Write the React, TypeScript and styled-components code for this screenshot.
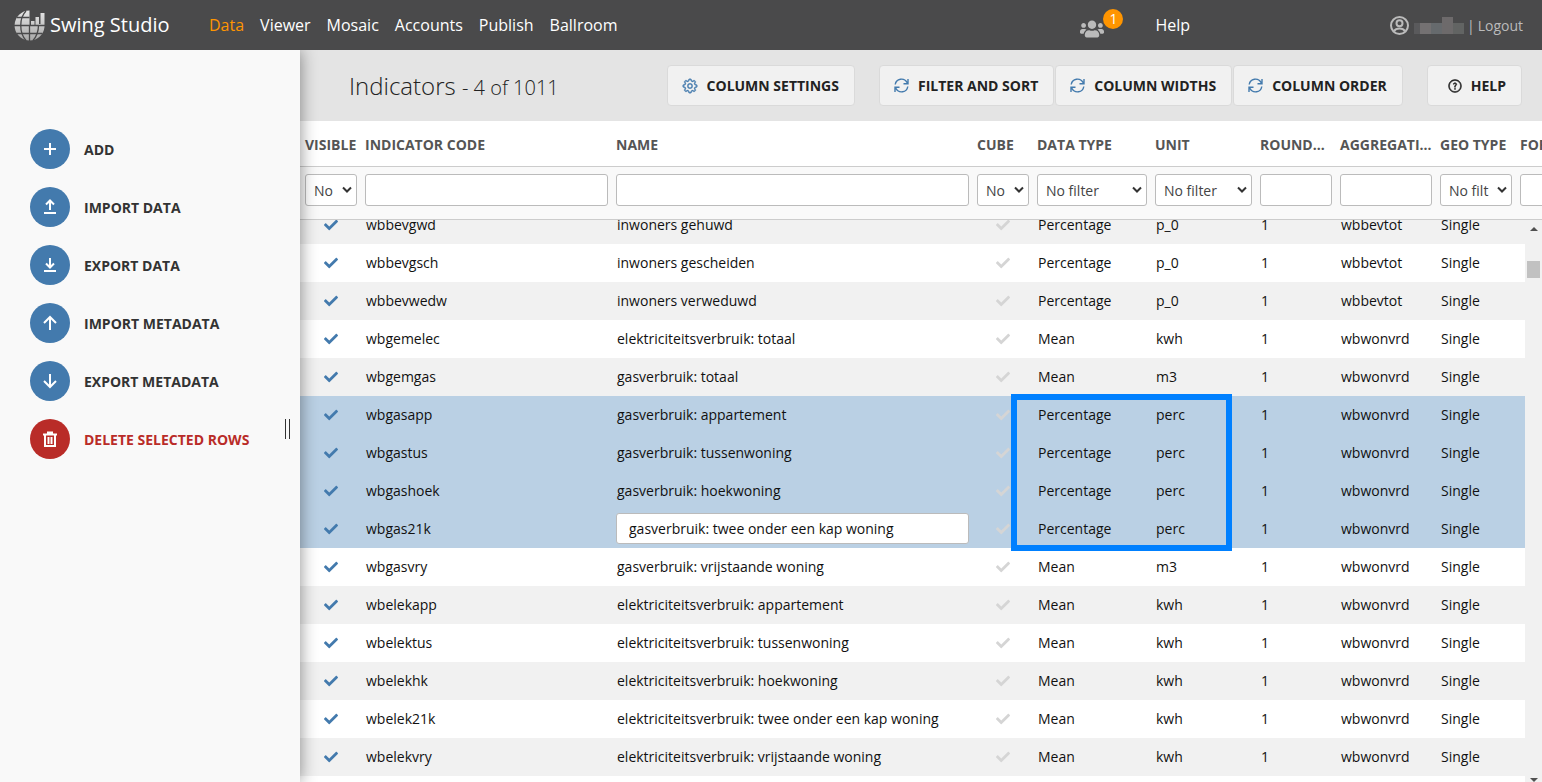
import React, { useLayoutEffect, useRef } from 'react';
import styled, { createGlobalStyle } from 'styled-components';
import { FaCheck, FaUsers } from 'react-icons/fa';
import { GoGear, GoQuestion } from 'react-icons/go';

const GlobalStyle = createGlobalStyle`
  *, *::before, *::after { box-sizing: border-box; }
  body {
    margin: 0;
    background: #fff;
    color: #222;
    font-family: 'Open Sans', 'Liberation Sans', sans-serif;
    font-size: 14px;
  }
  button, input, select { font: inherit; color: inherit; }
`;

const Page = styled.div`
  display: flex;
  flex-direction: column;
  height: 100vh;
  overflow: hidden;
`;

const TopBar = styled.header`
  display: flex;
  align-items: center;
  flex: none;
  height: 50px;
  padding: 0 19px 0 14px;
  background: #4a4a4b;
  color: #fff;
`;

const Brand = styled.a`
  display: flex;
  align-items: center;
  gap: 5px;
  width: 195px;
  color: #fff;
  font-size: 20px;
  line-height: 50px;
  text-decoration: none;
`;

const Nav = styled.nav`
  display: flex;
  flex: 1;
  gap: 16px;
`;

const NavLink = styled.a<{ $active?: boolean }>`
  color: ${(p) => (p.$active ? '#ff9500' : '#fff')};
  font-size: 16px;
  line-height: 50px;
  text-decoration: none;
`;

const UsersButton = styled.button`
  position: relative;
  width: 46px;
  height: 50px;
  margin-right: 29px;
  padding: 12px 0 0;
  border: 0;
  background: none;
  color: #bbb;
  text-align: left;
`;

const Badge = styled.span`
  position: absolute;
  top: 9px;
  right: 3px;
  width: 20px;
  height: 20px;
  border-radius: 10px;
  background: #ff9500;
  color: #fff;
  font-size: 14px;
  line-height: 20px;
  text-align: center;
`;

const Account = styled.div`
  display: flex;
  align-items: center;
  justify-content: flex-end;
  width: 333px;
  color: #bbb;
  font-size: 14px;
`;

const MaskedName = styled.span`
  display: flex;
  align-items: flex-end;
  width: 50px;
  height: 18px;
  margin: 0 3px 0 5px;
`;

const MaskBlock = styled.i<{ $color: string; $wide?: boolean; $tall?: boolean }>`
  width: ${(p) => (p.$wide ? 11 : 6)}px;
  height: ${(p) => (p.$tall ? 17 : 11)}px;
  background: ${(p) => p.$color};
`;

const LogoutLink = styled.a`
  margin-left: 3px;
  color: #bbb;
  text-decoration: none;
`;

const Main = styled.div`
  display: flex;
  flex: 1;
  min-height: 0;
`;

const Sidebar = styled.aside`
  position: relative;
  z-index: 2;
  display: flex;
  flex: none;
  width: 300px;
  background: #f9f9f9;
  box-shadow: 0 0 16px rgba(0, 0, 0, 0.45);
  clip-path: inset(0 -20px 0 0);
`;

const Actions = styled.div`
  display: flex;
  flex: 1;
  flex-direction: column;
  gap: 18px;
  padding: 79px 0 0 30px;
`;

const ActionButton = styled.button<{ $danger?: boolean }>`
  display: flex;
  align-items: center;
  gap: 14px;
  height: 40px;
  padding: 0;
  border: 0;
  background: none;
  color: ${(p) => (p.$danger ? '#b92c28' : '#333')};
  font-size: 14px;
  font-weight: 700;
  text-transform: uppercase;
  white-space: nowrap;
`;

const ActionDisc = styled.span<{ $danger?: boolean }>`
  display: flex;
  align-items: center;
  justify-content: center;
  width: 40px;
  height: 40px;
  border-radius: 20px;
  background: ${(p) => (p.$danger ? '#b92c28' : '#437aad')};
  color: #fff;
`;

const SplitHandle = styled.div`
  align-self: center;
  width: 5px;
  height: 20px;
  margin: 26px 10px 0 0;
  border: solid #333;
  border-width: 0 1px;
`;

const Content = styled.main`
  display: flex;
  flex: 1;
  flex-direction: column;
  min-width: 0;
`;

const Toolbar = styled.div`
  display: flex;
  align-items: center;
  flex: none;
  height: 71px;
  padding: 0 20px 0 49px;
  background: #e4e4e4;
`;

const Title = styled.h1`
  flex: 1;
  margin: 0;
  color: #222;
  font-size: 24px;
  font-weight: 300;
  white-space: nowrap;
`;

const Count = styled.small`
  font-size: 20px;
`;

const ButtonGroup = styled.div`
  display: flex;
  gap: 1px;
  margin-left: 24px;
`;

const ToolButton = styled.button<{ $roomy?: boolean }>`
  display: flex;
  align-items: center;
  gap: 9px;
  height: 41px;
  padding: 0 15px 0 ${(p) => (p.$roomy ? 20 : 14)}px;
  border: 1px solid #dadada;
  border-radius: 4px;
  background: #f1f1f1;
  color: #222;
  font-size: 14px;
  font-weight: 700;
  text-transform: uppercase;
  white-space: nowrap;
`;

const ToolIcon = styled.span<{ $plain?: boolean }>`
  display: flex;
  color: ${(p) => (p.$plain ? '#222' : '#437aad')};
`;

const HeadArea = styled.div`
  flex: none;
  overflow: hidden;
  border-bottom: 1px solid #ccc;
`;

const Table = styled.table<{ $overhang?: number }>`
  width: calc(100% + ${(p) => p.$overhang ?? 0}px);
  min-width: 1180px;
  table-layout: fixed;
  border-collapse: collapse;
`;

const HeadCell = styled.th`
  height: 45px;
  padding: 2px 4px 0;
  border-bottom: 1px solid #ccc;
  overflow: hidden;
  color: #555;
  font-size: 14px;
  font-weight: 700;
  text-align: left;
  text-overflow: ellipsis;
  text-transform: uppercase;
  white-space: nowrap;
  &:first-child { padding-left: 5px; }
`;

const FilterCell = styled.td`
  height: 53px;
  padding: 7px 4px 0;
  background: #f9f9f9;
  vertical-align: top;
  &:first-child { padding-left: 5px; }
`;

const FilterInput = styled.input`
  display: block;
  width: 100%;
  height: 32px;
  padding: 0 8px;
  border: 1px solid #bbb;
  border-radius: 3px;
  background: #fff;
`;

const SelectBox = styled.div`
  position: relative;
  display: flex;
`;

const FilterSelect = styled.select`
  appearance: none;
  width: 100%;
  height: 32px;
  padding: 1px 19px 0 8px;
  border: 1px solid #bbb;
  border-radius: 3px;
  background: #fff;
  color: #444;
  text-overflow: clip;
`;

const SelectArrow = styled.svg`
  position: absolute;
  top: 12px;
  right: 5px;
  pointer-events: none;
`;

const BodyArea = styled.div`
  display: flex;
  flex: 1;
  min-height: 0;
`;

const Scroller = styled.div`
  flex: 1;
  min-width: 0;
  overflow: auto;
  scrollbar-width: none;
`;

const Row = styled.tr<{ $selected?: boolean }>`
  height: 38px;
  background: ${(p) => (p.$selected ? '#bad0e4' : '#fff')};
  &:nth-child(odd) { background: ${(p) => (p.$selected ? '#bad0e4' : '#f1f1f1')}; }
`;

const Cell = styled.td`
  position: relative;
  padding: 0 5px;
  color: #111;
  font-size: 14px;
  line-height: 20px;
  white-space: nowrap;
`;

const CheckCell = styled(Cell)<{ $muted?: boolean }>`
  color: ${(p) => (p.$muted ? '#d5d5d5' : '#437aad')};
  text-align: center;
  line-height: 0;
`;

const NameInput = styled.input`
  display: block;
  width: calc(100% + 2px);
  height: 31px;
  margin: 0 -1px 1px;
  padding: 0 12px;
  border: 1px solid #bbb;
  border-radius: 3px;
  background: #fff;
`;

const Highlight = styled.div`
  position: absolute;
  z-index: 1;
  top: -2px;
  left: -22px;
  width: 221px;
  height: 157px;
  border: 6px solid #0080ff;
  pointer-events: none;
`;

const ScrollTrack = styled.div`
  display: flex;
  flex: none;
  flex-direction: column;
  align-items: center;
  width: 17px;
  padding-top: 7px;
  background: #f1f1f1;
`;

const ScrollThumb = styled.div`
  width: 13px;
  height: 17px;
  margin: 30px 0 auto;
  background: #c1c1c1;
`;

const ScrollArrow = styled.div<{ $down?: boolean }>`
  width: 0;
  height: 0;
  border: solid transparent;
  border-width: ${(p) => (p.$down ? '4px 4px 0' : '0 4px 4px')};
  border-color: #505050 transparent;
`;

const Logo = () => (
  <svg width="31" height="31" viewBox="0 0 31 31" aria-hidden="true">
    <defs>
      <linearGradient id="globe" x1="0" y1="0" x2="0" y2="1">
        <stop offset="0" stopColor="#e6e6e6" />
        <stop offset="1" stopColor="#a8a8a8" />
      </linearGradient>
    </defs>
    <path
      fill="url(#globe)"
      d="M15.500 .5V15H17V11H20.500V15H21.500V7H25V14H26.500V3H30.500V17A15 15 0 1 1 15.500 .5Z"
    />
    <g fill="none" stroke="#4a4a4b" strokeWidth="1.300">
      <path d="M0 15.500H31M3 7.500H15.500M2.500 23.500H28.500M15.500 15V31" />
      <path d="M12 1C5 8 5 23 12 30.500M19 30.500C23 26 24.500 21 24.500 15" />
    </g>
  </svg>
);

const SyncIcon = () => (
  <svg width="15" height="15" viewBox="0 0 15 15" fill="none" stroke="currentColor" strokeWidth="1.400" aria-hidden="true">
    <path d="M1.200 6.500A6.300 6.300 0 0 1 13 4.500L13.800 5.700M14 1V5.700H9.500" />
    <path d="M13.800 8.500A6.300 6.300 0 0 1 2 10.500L1.200 9.300M1 14V9.300H5.500" />
  </svg>
);

const UserIcon = () => (
  <svg width="20" height="20" viewBox="0 0 20 20" fill="none" stroke="currentColor" strokeWidth="2" aria-hidden="true">
    <circle cx="10.500" cy="10.500" r="8.500" />
    <circle cx="10.500" cy="8.300" r="3" />
    <path d="M5 16.300C6.500 13.700 8.500 13.500 10.500 13.500S14.500 13.700 16 16.300" />
  </svg>
);

const iconPaths = {
  add: 'M10 4v12M4 10h12',
  importData: 'M10 13V4M6 7.500L10 3.500L14 7.500M4 16h12',
  exportData: 'M10 3v9M6 8.500L10 12.500L14 8.500M4 16h12',
  up: 'M10 17V4M4 10L10 4L16 10',
  down: 'M10 3v13M4 10L10 16L16 10',
  trash: 'M3 5.500H17M8 5V3.500H12V5M5 6V17H15V6M8.500 8V15M11.500 8V15',
};

type IconName = keyof typeof iconPaths;

const LineIcon = ({ name }: { name: IconName }) => (
  <svg width="20" height="20" viewBox="0 0 20 20" fill="none" stroke="currentColor" strokeWidth="2" aria-hidden="true">
    <path d={iconPaths[name]} />
  </svg>
);

const columns = [
  { label: 'Visible', width: 61, filter: 'No' },
  { label: 'Indicator code', width: 251 },
  { label: 'Name' },
  { label: 'Cube', width: 60, filter: 'No' },
  { label: 'Data type', width: 118, filter: 'No filter' },
  { label: 'Unit', width: 105, filter: 'No filter' },
  { label: 'Round...', width: 80 },
  { label: 'Aggregation', width: 100 },
  { label: 'Geo type', width: 80, filter: 'No filt' },
];

const Columns = ({ last }: { last: number }) => (
  <colgroup>
    {columns.map((c) => (
      <col key={c.label} width={c.width} />
    ))}
    <col width={last} />
  </colgroup>
);

const rows = [
  ['wbbevgwd', 'inwoners gehuwd', 'Percentage', 'p_0', 'wbbevtot'],
  ['wbbevgsch', 'inwoners gescheiden', 'Percentage', 'p_0', 'wbbevtot'],
  ['wbbevwedw', 'inwoners verweduwd', 'Percentage', 'p_0', 'wbbevtot'],
  ['wbgemelec', 'elektriciteitsverbruik: totaal', 'Mean', 'kwh', 'wbwonvrd'],
  ['wbgemgas', 'gasverbruik: totaal', 'Mean', 'm3', 'wbwonvrd'],
  ['wbgasapp', 'gasverbruik: appartement', 'Percentage', 'perc', 'wbwonvrd'],
  ['wbgastus', 'gasverbruik: tussenwoning', 'Percentage', 'perc', 'wbwonvrd'],
  ['wbgashoek', 'gasverbruik: hoekwoning', 'Percentage', 'perc', 'wbwonvrd'],
  ['wbgas21k', 'gasverbruik: twee onder een kap woning', 'Percentage', 'perc', 'wbwonvrd'],
  ['wbgasvry', 'gasverbruik: vrijstaande woning', 'Mean', 'm3', 'wbwonvrd'],
  ['wbelekapp', 'elektriciteitsverbruik: appartement', 'Mean', 'kwh', 'wbwonvrd'],
  ['wbelektus', 'elektriciteitsverbruik: tussenwoning', 'Mean', 'kwh', 'wbwonvrd'],
  ['wbelekhk', 'elektriciteitsverbruik: hoekwoning', 'Mean', 'kwh', 'wbwonvrd'],
  ['wbelek21k', 'elektriciteitsverbruik: twee onder een kap woning', 'Mean', 'kwh', 'wbwonvrd'],
  ['wbelekvry', 'elektriciteitsverbruik: vrijstaande woning', 'Mean', 'kwh', 'wbwonvrd'],
];

const actions: { label: string; icon: IconName; danger?: boolean }[] = [
  { label: 'Add', icon: 'add' },
  { label: 'Import data', icon: 'importData' },
  { label: 'Export data', icon: 'exportData' },
  { label: 'Import metadata', icon: 'up' },
  { label: 'Export metadata', icon: 'down' },
  { label: 'Delete selected rows', icon: 'trash', danger: true },
];

const EDITED = 'wbgas21k';
const isSelected = (i: number) => i >= 5 && i <= 8;

export default function App() {
  const scroller = useRef<HTMLDivElement>(null);

  useLayoutEffect(() => {
    if (scroller.current) scroller.current.scrollTop = 14;
  }, []);

  return (
    <Page>
      <GlobalStyle />
      <TopBar>
        <Brand href="#">
          <Logo />
          Swing Studio
        </Brand>
        <Nav>
          {['Data', 'Viewer', 'Mosaic', 'Accounts', 'Publish', 'Ballroom'].map((item) => (
            <NavLink key={item} href="#" $active={item === 'Data'}>
              {item}
            </NavLink>
          ))}
        </Nav>
        <UsersButton aria-label="Users">
          <FaUsers size={24} />
          <Badge>1</Badge>
        </UsersButton>
        <NavLink href="#">Help</NavLink>
        <Account>
          <UserIcon />
          <MaskedName>
            <MaskBlock $color="#5a5a5c" />
            <MaskBlock $color="#747172" $wide />
            <MaskBlock $color="#666a6d" $wide />
            <MaskBlock $color="#6d6a6b" $wide $tall />
            <MaskBlock $color="#626463" $wide />
          </MaskedName>
          |<LogoutLink href="#">Logout</LogoutLink>
        </Account>
      </TopBar>
      <Main>
        <Sidebar>
          <Actions>
            {actions.map((a) => (
              <ActionButton key={a.label} $danger={a.danger}>
                <ActionDisc $danger={a.danger}>
                  <LineIcon name={a.icon} />
                </ActionDisc>
                {a.label}
              </ActionButton>
            ))}
          </Actions>
          <SplitHandle />
        </Sidebar>
        <Content>
          <Toolbar>
            <Title>
              Indicators <Count>- 4 of 1011</Count>
            </Title>
            <ButtonGroup>
              <ToolButton>
                <ToolIcon><GoGear size={16} strokeWidth={0.5} /></ToolIcon>
                Column settings
              </ToolButton>
            </ButtonGroup>
            <ButtonGroup>
              {['Filter and sort', 'Column widths', 'Column order'].map((label) => (
                <ToolButton key={label}>
                  <ToolIcon><SyncIcon /></ToolIcon>
                  {label}
                </ToolButton>
              ))}
            </ButtonGroup>
            <ButtonGroup>
              <ToolButton $roomy>
                <ToolIcon $plain><GoQuestion size={14} strokeWidth={1} /></ToolIcon>
                Help
              </ToolButton>
            </ButtonGroup>
          </Toolbar>
          <HeadArea>
            <Table $overhang={74}>
              <Columns last={100} />
              <thead>
                <tr>
                  {columns.map((c) => (
                    <HeadCell key={c.label}>{c.label}</HeadCell>
                  ))}
                  <HeadCell>Format</HeadCell>
                </tr>
              </thead>
              <tbody>
                <tr>
                  {columns.map((c) => (
                    <FilterCell key={c.label}>
                      {c.filter ? (
                        <SelectBox>
                          <FilterSelect aria-label={c.label}>
                            <option>{c.filter}</option>
                          </FilterSelect>
                          <SelectArrow width="10" height="8" viewBox="0 0 10 8" aria-hidden="true">
                            <path d="M1 1.500L5 5.500L9 1.500" fill="none" stroke="#333" strokeWidth="2" />
                          </SelectArrow>
                        </SelectBox>
                      ) : (
                        <FilterInput aria-label={c.label} />
                      )}
                    </FilterCell>
                  ))}
                  <FilterCell>
                    <FilterInput aria-label="Format" />
                  </FilterCell>
                </tr>
              </tbody>
            </Table>
          </HeadArea>
          <BodyArea>
            <Scroller ref={scroller}>
              <Table>
                <Columns last={9} />
                <tbody>
                  {rows.map(([code, name, type, unit, aggregation], i) => (
                    <Row key={code} $selected={isSelected(i)}>
                      <CheckCell><FaCheck size={14} /></CheckCell>
                      <Cell>{code}</Cell>
                      <Cell>
                        {code === EDITED ? <NameInput aria-label="Name" defaultValue={name} /> : name}
                      </Cell>
                      <CheckCell $muted><FaCheck size={14} /></CheckCell>
                      <Cell>
                        {type}
                        {i === 5 && <Highlight />}
                      </Cell>
                      <Cell>{unit}</Cell>
                      <Cell>1</Cell>
                      <Cell>{aggregation}</Cell>
                      <Cell>Single</Cell>
                      <Cell />
                    </Row>
                  ))}
                  <Row><Cell colSpan={10} /></Row>
                </tbody>
              </Table>
            </Scroller>
            <ScrollTrack>
              <ScrollArrow />
              <ScrollThumb />
              <ScrollArrow $down />
            </ScrollTrack>
          </BodyArea>
        </Content>
      </Main>
    </Page>
  );
}
